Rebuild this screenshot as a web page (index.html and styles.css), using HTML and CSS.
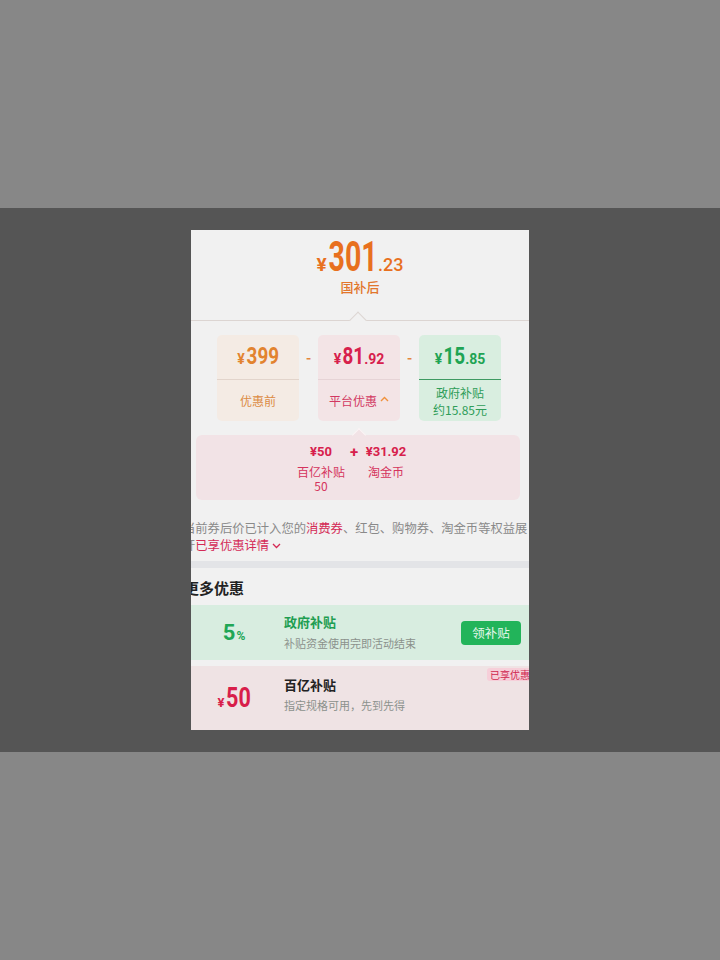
FILE: index.html
```html
<!DOCTYPE html>
<html lang="zh-CN">
<head>
    <meta charset="UTF-8">
    <meta name="viewport" content="width=device-width, initial-scale=1.0">
    <title>价格明细</title>
    <link rel="stylesheet" href="styles.css">
</head>
<body>
    <div class="stage">
        <div class="sheet">
            <div class="hero">
                <div class="hero-price"><span class="yen">¥</span><span class="hero-int">301</span><span class="hero-dec">.23</span></div>
                <div class="hero-label">国补后</div>
            </div>

            <div class="rule"></div>

            <div class="calc">
                <div class="cell cell-base">
                    <div class="cell-price"><span class="yen">¥</span><span class="cell-int int-3">399</span></div>
                    <div class="cell-label">优惠前</div>
                </div>
                <span class="minus">-</span>
                <div class="cell cell-platform">
                    <div class="cell-price"><span class="yen">¥</span><span class="cell-int int-2">81</span><span class="cell-dec">.92</span></div>
                    <div class="cell-label">平台优惠<svg class="caret" width="9" height="6" viewBox="0 0 9 6"><path d="M1 5L4.5 1.5L8 5" fill="none" stroke="#f0913c" stroke-width="1.4"/></svg></div>
                </div>
                <span class="minus">-</span>
                <div class="cell cell-gov">
                    <div class="cell-price"><span class="yen">¥</span><span class="cell-int int-2">15</span><span class="cell-dec">.85</span></div>
                    <div class="cell-label">政府补贴<br>约15.85元</div>
                </div>
            </div>

            <div class="detail">
                <div class="detail-col col-a">
                    <div class="detail-amt">¥50</div>
                    <div class="detail-name">百亿补贴<br>50</div>
                </div>
                <div class="detail-plus">+</div>
                <div class="detail-col col-b">
                    <div class="detail-amt">¥31.92</div>
                    <div class="detail-name">淘金币</div>
                </div>
            </div>

            <p class="tip">当前券后价已计入您的<span class="hl">消费券</span>、红包、购物券、淘金币等权益展开<span class="hl">已享优惠详情</span><svg class="chev" width="9" height="6" viewBox="0 0 9 6"><path d="M1 1L4.5 4.5L8 1" fill="none" stroke="#d42a55" stroke-width="1.3"/></svg></p>

            <div class="band"></div>

            <h2 class="more-title">更多优惠</h2>

            <div class="offer offer-gov">
                <div class="offer-value"><span class="val-big">5</span><span class="val-unit">%</span></div>
                <div class="offer-text">
                    <div class="offer-name">政府补贴</div>
                    <div class="offer-desc">补贴资金使用完即活动结束</div>
                </div>
                <button class="claim-btn">领补贴</button>
            </div>

            <div class="offer offer-bybt">
                <div class="offer-value"><span class="val-yen">¥</span><span class="val-big val-cond">50</span></div>
                <div class="offer-text">
                    <div class="offer-name">百亿补贴</div>
                    <div class="offer-desc">指定规格可用，先到先得</div>
                </div>
                <span class="used-tag">已享优惠</span>
            </div>
        </div>
    </div>
</body>
</html>
```

FILE: styles.css
```css
body {
    margin: 0;
    background: #878787;
    font-family: "Noto Sans CJK SC", sans-serif;
}
.stage {
    margin-top: 208px;
    height: 544px;
    background: #555555;
    display: flex;
    justify-content: center;
    padding-top: 22px;
    box-sizing: border-box;
}
.sheet {
    width: 338px;
    height: 500px;
    background: #f1f1f1;
    overflow: hidden;
}

/* headline price */
.hero {
    height: 90px;
    padding-top: 6px;
    box-sizing: border-box;
    text-align: center;
    color: #e8701e;
}
.hero-price {
    font-family: Roboto, sans-serif;
    font-weight: 700;
    line-height: 42px;
    height: 42px;
}
.hero-price .yen {
    font-size: 19px;
    margin-right: 1px;
}
.hero-int {
    display: inline-block;
    font-size: 42px;
    transform: scaleX(.68);
    margin: 0 -11px;
}
.hero-dec {
    font-size: 18px;
    font-weight: 500;
}
.hero-label {
    font-size: 13px;
    line-height: 18px;
    font-weight: 500;
    color: #e2762c;
}
.rule {
    position: relative;
    height: 1px;
    background: #dcd5d2;
}
.rule::after {
    content: "";
    position: absolute;
    left: 161px;
    top: -6px;
    width: 11px;
    height: 11px;
    background: #f1f1f1;
    border-top: 1px solid #dcd5d2;
    border-left: 1px solid #dcd5d2;
    transform: rotate(45deg);
}

/* before / discount / subsidy boxes */
.calc {
    display: flex;
    justify-content: center;
    margin-top: 14px;
    padding-right: 2px;
}
.cell {
    flex: 0 0 82px;
    height: 86px;
    border-radius: 5px;
    text-align: center;
}
.cell-price {
    height: 44px;
    line-height: 44px;
    font-family: Roboto, sans-serif;
    font-weight: 700;
    border-bottom: 1px solid #e2d4cb;
}
.cell-price .yen {
    font-size: 14px;
}
.cell-int {
    display: inline-block;
    font-size: 23px;
    transform: scaleX(.82);
}
.int-3 {
    margin: 0 -3.5px 0 -2px;
}
.int-2 {
    margin: 0 -2.3px 0 -1px;
}
.cell-dec {
    font-size: 14px;
}
.cell-label {
    height: 41px;
    display: flex;
    align-items: center;
    justify-content: center;
    font-size: 12px;
    line-height: 17px;
}
.cell-base {
    background: #f4ebe4;
    color: #e2832f;
}
.cell-base .cell-label {
    color: #dc8b45;
}
.cell-platform {
    background: #f3e4e6;
    color: #d7204c;
}
.cell-platform .cell-price {
    border-bottom-color: #e6d3d6;
}
.cell-platform .cell-label {
    color: #d23862;
}
.caret {
    margin-left: 3px;
    margin-bottom: 3px;
}
.cell-gov {
    background: #d9eee0;
    color: #1fa454;
}
.cell-gov .cell-price {
    border-bottom-color: #3e9a62;
}
.cell-gov .cell-label {
    color: #2e9d58;
}
.minus {
    flex: 0 0 19px;
    line-height: 44px;
    text-align: center;
    color: #e4863c;
    font-size: 14px;
    font-weight: 700;
}

/* breakdown of the platform discount */
.detail {
    position: relative;
    height: 65px;
    margin: 14px 9px 0 5px;
    padding: 9px 10px 0 0;
    box-sizing: border-box;
    background: #f2e3e6;
    border-radius: 6px;
    display: flex;
    justify-content: center;
    color: #d7204c;
}
.detail::before {
    content: "";
    position: absolute;
    left: 158px;
    top: -5px;
    width: 9px;
    height: 9px;
    background: #f2e3e6;
    border-top: 1px solid #fbf6f7;
    border-left: 1px solid #fbf6f7;
    transform: rotate(45deg);
}
.detail-col {
    text-align: center;
}
.col-a {
    width: 56px;
}
.col-b {
    width: 54px;
}
.detail-amt {
    font-family: Roboto, sans-serif;
    font-weight: 700;
    font-size: 13px;
    line-height: 16px;
}
.detail-name {
    margin-top: 5px;
    font-size: 12px;
    line-height: 14px;
    color: #d5345d;
}
.detail-plus {
    width: 10px;
    text-align: center;
    font-family: Roboto, sans-serif;
    font-weight: 700;
    font-size: 15px;
    line-height: 16px;
}

.tip {
    width: 348px;
    margin: 20px 0 0 -8px;
    font-size: 12.3px;
    line-height: 17px;
    color: #8a8a8a;
}
.tip .hl {
    color: #d42a55;
}
.chev {
    margin-left: 3px;
    vertical-align: 1px;
}
.band {
    height: 7px;
    margin-top: 7px;
    background: #e3e4e7;
}
.more-title {
    margin: 0 0 0 -7px;
    padding: 8px 0 5px;
    font-size: 15px;
    line-height: 24px;
    font-weight: 700;
    color: #222;
}

/* offer rows */
.offer {
    position: relative;
    display: grid;
    grid-template-columns: 86px 1fr auto;
    column-gap: 7px;
    align-items: center;
    padding-right: 8px;
}
.offer-gov {
    height: 55px;
    background: #d8ede0;
}
.offer-bybt {
    height: 64px;
    margin-top: 6px;
    background: #efe3e4;
}
.offer-value {
    text-align: center;
    font-family: Roboto, sans-serif;
    font-weight: 700;
}
.offer-gov .offer-value {
    color: #21a656;
}
.offer-bybt .offer-value {
    color: #d81e4a;
}
.val-big {
    font-size: 22px;
}
.val-unit {
    font-size: 12px;
    margin-left: 1px;
}
.val-yen {
    font-size: 13px;
}
.val-cond {
    display: inline-block;
    font-size: 27px;
    transform: scaleX(.8);
    margin: 0 -3px 0 -2px;
}
.offer-text {
    align-self: start;
    padding-top: 8px;
}
.offer-bybt .offer-text {
    padding-top: 10px;
}
.offer-name {
    font-size: 13px;
    line-height: 18px;
    font-weight: 700;
    color: #222;
}
.offer-gov .offer-name {
    color: #1f9e52;
}
.offer-desc {
    margin-top: 4px;
    font-size: 11px;
    line-height: 16px;
    color: #8b918c;
}
.offer-bybt .offer-desc {
    margin-top: 3px;
}
.claim-btn {
    width: 60px;
    height: 24px;
    border: none;
    border-radius: 4px;
    background: #22b45a;
    color: #e6f7ec;
    font-family: "Noto Sans CJK SC", sans-serif;
    font-size: 12.5px;
    padding: 0;
}
.used-tag {
    position: absolute;
    top: 2px;
    right: -4px;
    padding: 0 3px;
    font-size: 10px;
    line-height: 13px;
    color: #d0264f;
    background: #f6cfd9;
    border-radius: 3px 0 0 3px;
}
```
